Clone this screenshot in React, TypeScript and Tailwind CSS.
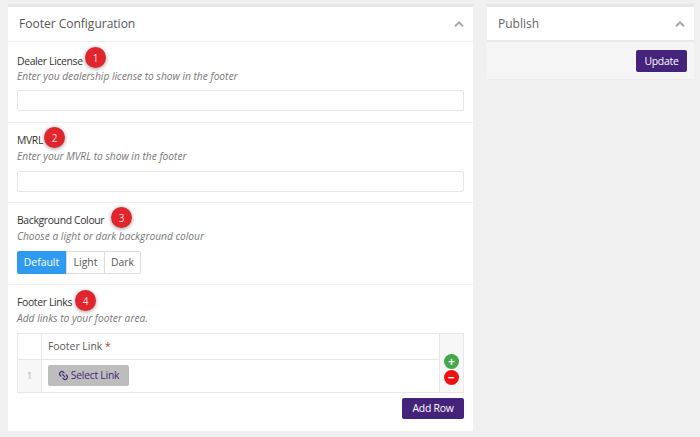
import { Link2 } from "lucide-react";

function Badge({ n, className }: { n: number; className: string }) {
    return (
        <span
            className={`absolute flex h-[21px] w-[21px] items-center justify-center rounded-full bg-[#e0252d] text-[10px] text-[#fbdcdc] shadow-[0_1px_4px_rgba(0,0,0,0.4)] ${className}`}
        >
            {n}
        </span>
    );
}

function Chevron() {
    return (
        <svg width="10" height="6" viewBox="0 0 10 6" fill="none" stroke="#a9a9a9" strokeWidth="2">
            <path d="M1 5.2 L5 1.4 L9 5.2" />
        </svg>
    );
}

export default function App() {
    return (
        <div className="flex h-[437px] w-[700px] items-start gap-[14px] overflow-hidden bg-[#f0f0f0] pl-[8px] pt-[7px] font-['Open_Sans',sans-serif]">
            <div className="h-[424px] w-[465px] shrink-0 bg-white shadow-[0_-3px_0_#e6e6e6]">
                <div className="flex h-[35px] items-center justify-between border-b border-[#eeeeee] pl-[11px] pr-[9px]">
                    <span className="text-[12px] text-[#555]">Footer Configuration</span>
                    <Chevron />
                </div>

                <div className="h-[81px] border-b border-[#efefef] px-[9px] pt-[11px]">
                    <div className="relative h-[16px] text-[10.4px] leading-[16px] tracking-[-0.35px] text-[#333]">
                        Dealer License
                        <Badge n={1} className="left-[68px] top-[-6px]" />
                    </div>
                    <p className="h-[15px] text-[10.2px] italic leading-[15px] text-[#777]">Enter you dealership license to show in the footer</p>
                    <input className="mt-[6px] block h-[21px] w-[447px] rounded-[2px] border border-[#e6e6e6] bg-white" />
                </div>

                <div className="h-[80px] border-b border-[#efefef] px-[9px] pt-[9px]">
                    <div className="relative h-[17px] text-[10.4px] leading-[16px] tracking-[-0.35px] text-[#333]">
                        MVRL
                        <Badge n={2} className="left-[27px] top-[-5px]" />
                    </div>
                    <p className="h-[15px] text-[10.2px] italic leading-[15px] text-[#777]">Enter your MVRL to show in the footer</p>
                    <input className="mt-[7px] block h-[21px] w-[447px] rounded-[2px] border border-[#e6e6e6] bg-white" />
                </div>

                <div className="h-[82px] border-b border-[#efefef] px-[9px] pt-[9px]">
                    <div className="relative h-[17px] text-[10.4px] leading-[16px] tracking-[-0.35px] text-[#333]">
                        Background Colour
                        <Badge n={3} className="left-[94px] top-[-5px]" />
                    </div>
                    <p className="h-[15px] text-[10.2px] italic leading-[15px] text-[#777]">Choose a light or dark background colour</p>
                    <div className="mt-[7px] flex h-[23px] w-fit text-[10.4px] leading-[23px]">
                        <span className="w-[49px] rounded-l-[2px] bg-[#2f9bf0] text-center text-white">Default</span>
                        <span className="w-[38px] border-y border-l border-[#dcdcdc] text-center leading-[21px] text-[#555]">Light</span>
                        <span className="w-[37px] rounded-r-[2px] border border-[#dcdcdc] text-center leading-[21px] text-[#555]">Dark</span>
                    </div>
                </div>

                <div className="px-[9px] pt-[9px]">
                    <div className="relative h-[17px] text-[10.4px] leading-[16px] tracking-[-0.35px] text-[#333]">
                        Footer Links
                        <Badge n={4} className="left-[58px] top-[-4px]" />
                    </div>
                    <p className="h-[15px] text-[10.2px] italic leading-[15px] text-[#777]">Add links to your footer area.</p>
                    <div className="mt-[7px] flex h-[60px] w-[447px] border border-[#e8e8e8] text-[10.4px]">
                        <div className="flex w-[24px] shrink-0 flex-col border-r border-[#e8e8e8]">
                            <div className="h-[26px] border-b border-[#e8e8e8]" />
                            <div className="flex flex-1 items-center justify-center bg-[#f7f7f7] text-[9px] text-[#aaa]">1</div>
                        </div>
                        <div className="flex flex-1 flex-col">
                            <div className="h-[26px] border-b border-[#e8e8e8] pl-[6px] leading-[25px] text-[#555]">
                                Footer Link <span className="text-[#c0392b]">*</span>
                            </div>
                            <div className="pl-[6px] pt-[5px]">
                                <span className="flex h-[21px] w-[81px] items-center justify-center gap-[2px] rounded-[2px] bg-[#bdbdbd] text-[10.4px] font-medium tracking-[-0.25px] text-[#44277a]">
                                    <Link2 size={11} strokeWidth={2.5} className="rotate-45" />
                                    Select Link
                                </span>
                            </div>
                        </div>
                        <div className="flex w-[24px] shrink-0 flex-col items-center justify-end gap-[1px] border-l border-[#e8e8e8] bg-[#f7f7f7] pb-[7px]">
                            <span className="flex h-[15px] w-[15px] items-center justify-center rounded-full bg-[#43a847] text-[12px] font-bold leading-none text-white">+</span>
                            <span className="flex h-[15px] w-[15px] items-center justify-center rounded-full bg-[#ee1111] text-[12px] font-bold leading-none text-white">−</span>
                        </div>
                    </div>
                    <div className="mt-[5px] flex justify-end">
                        <span className="h-[21px] w-[62px] rounded-[2px] bg-[#44237a] text-center text-[10.4px] font-medium leading-[21px] tracking-[-0.25px] text-white">Add Row</span>
                    </div>
                </div>
            </div>

            <div className="w-[207px] shrink-0 shadow-[0_-3px_0_#e6e6e6]">
                <div className="flex h-[35px] items-center justify-between border-b-2 border-[#e9e9e9] bg-white pl-[11px] pr-[9px]">
                    <span className="text-[12px] text-[#666]">Publish</span>
                    <Chevron />
                </div>
                <div className="flex h-[38px] items-start justify-end border-b border-[#ececec] bg-[#f5f5f5] pr-[7px] pt-[8px]">
                    <span className="h-[22px] w-[51px] rounded-[2px] bg-[#44237a] text-center text-[10.4px] font-medium leading-[22px] tracking-[-0.25px] text-white">Update</span>
                </div>
            </div>
        </div>
    );
}
